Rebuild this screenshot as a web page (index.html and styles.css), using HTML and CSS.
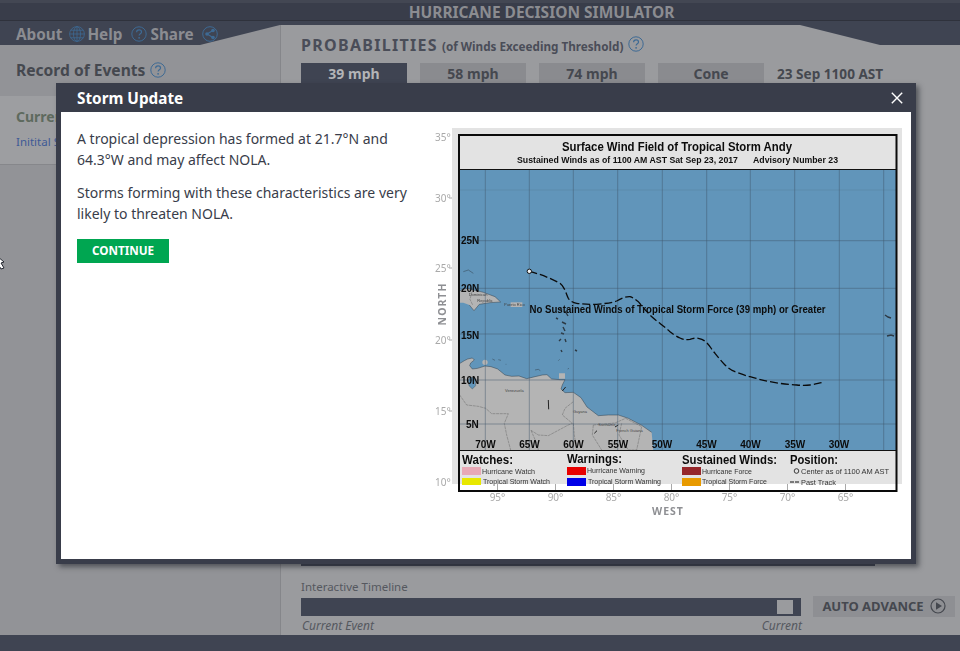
FILE: index.html
```html
<!DOCTYPE html>
<html lang="en">
<head>
<meta charset="utf-8">
<title>Hurricane Decision Simulator</title>
<link rel="stylesheet" href="styles.css">
</head>
<body>
<svg class="defs" width="0" height="0" aria-hidden="true">
  <symbol id="i-help" viewBox="0 0 16 16">
    <circle cx="8" cy="8" r="7.2" fill="none" stroke="currentColor" stroke-width="1"/>
    <path d="M5.6 6.2c0-1.500 1.100-2.300 2.500-2.300 1.400 0 2.400.8 2.400 2 0 1.800-2.400 1.900-2.400 3.700" fill="none" stroke="currentColor" stroke-width="1.200"/>
    <circle cx="8.100" cy="11.800" r=".9" fill="currentColor"/>
  </symbol>
  <symbol id="i-globe" viewBox="0 0 16 16">
    <g fill="none" stroke="currentColor" stroke-width=".8">
      <circle cx="8" cy="8" r="7.400"/>
      <ellipse cx="8" cy="8" rx="3.500" ry="7.400"/>
      <path d="M8 .6v14.800M.6 8h14.800M1.800 4.200h12.400M1.800 11.800h12.400"/>
    </g>
  </symbol>
  <symbol id="i-share" viewBox="0 0 16 16">
    <circle cx="8" cy="8" r="7.300" fill="none" stroke="currentColor" stroke-width="1"/>
    <path d="M11 4.500 5 8l6 3.500" fill="none" stroke="currentColor" stroke-width="1.200"/>
    <circle cx="11" cy="4.500" r="1.800" fill="currentColor"/>
    <circle cx="5" cy="8" r="1.800" fill="currentColor"/>
    <circle cx="11" cy="11.500" r="1.800" fill="currentColor"/>
  </symbol>
</svg>

<div class="app">
  <header class="titlebar">HURRICANE DECISION SIMULATOR</header>
  <div class="navrow">
    <nav class="nav">
      <span class="nav-item">About <svg class="nav-icon nav-icon-globe"><use href="#i-globe"/></svg></span>
      <span class="nav-item">Help <svg class="nav-icon nav-icon-help"><use href="#i-help"/></svg></span>
      <span class="nav-item">Share <svg class="nav-icon nav-icon-share"><use href="#i-share"/></svg></span>
    </nav>
    <div class="nav-notch"></div>
    <div class="nav-end"></div>
  </div>
  <main class="columns">
    <aside class="sidebar">
      <h2 class="record-title">Record of Events <svg class="help-icon"><use href="#i-help"/></svg></h2>
      <section class="record-current">
        <h3 class="current-title">Current Event</h3>
        <p class="current-text">Initital Storm Update</p>
      </section>
    </aside>
    <section class="panel">
      <h1 class="prob-title">PROBABILITIES <small class="prob-sub">(of Winds Exceeding Threshold)</small> <svg class="help-icon"><use href="#i-help"/></svg></h1>
      <div class="tabs">
        <span class="tab tab-active">39 mph</span>
        <span class="tab">58 mph</span>
        <span class="tab">74 mph</span>
        <span class="tab">Cone</span>
        <span class="tab-date">23 Sep 1100 AST</span>
      </div>
      <div class="map-frame"></div>
      <div class="timeline-label">Interactive Timeline</div>
      <div class="timeline-row">
        <div class="timeline-bar"><span class="thumb"></span></div>
        <button class="auto-advance" type="button">AUTO ADVANCE
          <svg class="play" viewBox="0 0 16 16"><circle cx="8" cy="8" r="7" fill="none" stroke="currentColor" stroke-width="1.200"/><path d="M6 4.200 12 8l-6 3.800z" fill="currentColor"/></svg>
        </button>
      </div>
      <div class="timeline-caption"><span>Current Event</span><span>Current</span></div>
    </section>
  </main>
  <footer class="footer"></footer>
</div>

<svg class="cursor" viewBox="0 0 6 14" aria-hidden="true"><path d="M-3 0 4 6 1 7 4 12 1 13-2 8z" fill="#fff" stroke="#23262f" stroke-width="1"/></svg>

<div class="modal">
  <div class="modal-head">
    <span class="modal-title">Storm Update</span>
    <svg class="modal-close" viewBox="0 0 12 12"><path d="M.8.8l10.400 10.400M11.200.8.800 11.200" stroke="#fff" stroke-width="1.400" fill="none"/></svg>
  </div>
  <div class="modal-body">
    <div class="modal-text">
      <p class="para">A tropical depression has formed at 21.7°N and 64.3°W and may affect NOLA.</p>
      <p class="para">Storms forming with these characteristics are very likely to threaten NOLA.</p>
      <button class="continue" type="button">CONTINUE</button>
    </div>
    <svg class="map" viewBox="430 125 475 395" width="475" height="395">
      <!-- image background -->
      <rect x="452" y="128" width="450" height="356" fill="#e3e3e3"/>
      <rect x="458" y="169" width="438" height="281" fill="#6195ba"/>

      <!-- South America -->
      <g transform="translate(455 355) scale(.3333)">
        <path class="land" d="M10 28 28 17 38 12 52 9 58 15 47 24 44 32 52 42 68 40 90 33 108 35 128 42 150 60 170 64 192 63 215 71 240 65 262 60 276 59 290 72 315 74 330 74 322 90 318 102 330 113 355 112 378 128 396 156 430 182 460 180 490 180 520 190 560 211 590 232 595 287 10 287z"/>
        <path class="lake" d="M46 66 60 70 62 92 52 102 42 92 40 76z"/>
        <path class="land" d="M82 22a8 8 0 1 1 16 0 8 8 0 1 1-16 0zM312 55h18v16h-18z"/>
        <path class="coast" d="M10 28 28 17 38 12 52 9 58 15 47 24 44 32 52 42 68 40 90 33 108 35 128 42 150 60 170 64 192 63 215 71 240 65 262 60 276 59 290 72 315 74 330 74 322 90 318 102 330 113 355 112 378 128 396 156 430 182 460 180 490 180 520 190 560 211 590 232"/>
        <path class="border" d="M14 120 35 150 70 154 92 160 110 176 160 176 148 205 155 240 167 285M228 226 250 240 280 242 340 210 352 205 322 180 330 160 355 140M355 205 358 240 365 285M228 226 245 265 250 285M415 210 480 204 512 190M415 210 412 240 440 285M500 205 492 240 520 285M512 190 560 215 545 285 520 285"/>
        <path class="coast" d="M112 12l8 4M130 14l8 2M152 28l2 0M240 45l10-2 6 4M310 17l4-4M338 42l4-2"/>
        <path d="M322 108l10-12M418 235l8-8M280 135l1 28M480 216l10-6" stroke="#222" stroke-width="3" fill="none"/>
        <text class="place" x="150" y="110">Venezuela</text>
        <text class="place" x="354" y="175">Guyana</text>
        <text class="place" x="430" y="214">Suriname</text>
        <text class="place" x="484" y="230">French Guiana</text>
      </g>

      <!-- Caribbean islands -->
      <g transform="translate(440 260) scale(.3333)">
        <path class="land" d="M58 95 66 88 84 86 110 92 130 97 165 110 182 126 150 128 118 133 102 152 88 135 70 128 58 128z"/>
        <rect class="land" x="212" y="127" width="35" height="14"/>
        <path class="coast" d="M70 35 85 30 100 40M58 95 66 88 84 86 110 92 130 97 165 110 182 126 150 128 118 133 102 152 88 135"/>
        <path class="border" d="M96 95 90 118 98 135"/>
        <text class="place" x="86" y="109">Dominican</text>
        <text class="place" x="112" y="127">Republic</text>
        <text class="place" x="192" y="137">Puerto Rico</text>
      </g>
      <path class="coast" d="M560 308l2 2M565 311l3 5M556 318l2 1M562 322l4 2M563 327l2 4M561 333l3 1M565 339l1 3M561 350l1 2M575 350l2 1M559 341l2-2M885 315l3 2 3 1M887 336l4-1 3 1"/>

      <!-- grid -->
      <path class="grid" d="M485.300 169V450M529.300 169V450M573.300 169V450M617.700 169V450M662.300 169V450M706.700 169V450M750.300 169V450M794.700 169V450M839.300 169V450M883.700 169V450"/>
      <path class="grid grid-faint" d="M458 190H896"/>
      <path class="grid" d="M458 240.700H896M458 288.300H896M458 334H896M458 380H896M458 424H896"/>

      <!-- track -->
      <path class="track" d="M529.300 271.300C540 274 550 278 560 283.300 565 287 566 294 568.300 298.300 571 302 574 303 576.700 303.300 585 304.500 590 304.500 596.700 304.300 605 303.500 611 303 616.700 301 622 298 626 296.500 630 296.700 634 298 636 300 638.300 301.700 642 306 646 311 650 315 656 321 664 326 670 331.700 673 334 677 337 680 338 684 340 686 340 690 339.300 694 338 696 338 698.300 338.300 702 339 704 340 706.700 342.700 710 346 712 350 715 353.300 718 357 721 361 725 365 728 368 731 370 735 371.700 740 373.500 745 375.500 750 376.700 757 378.500 763 380.500 770 381.700 779 383.500 788 384.500 796.700 385 802 385.500 806 385.500 810 385 815 384.500 819 383 823.300 382.300"/>
      <circle cx="529.300" cy="271.300" r="2.200" fill="#f2f2f2" stroke="#111" stroke-width="1"/>

      <!-- map labels -->
      <g class="lat">
        <text x="461" y="244">25N</text>
        <text x="461" y="292">20N</text>
        <text x="461" y="339">15N</text>
        <text x="461" y="384">10N</text>
        <text x="466" y="428">5N</text>
      </g>
      <g class="lon">
        <text x="485.500" y="448">70W</text>
        <text x="529.500" y="448">65W</text>
        <text x="573.500" y="448">60W</text>
        <text x="618" y="448">55W</text>
        <text x="662" y="448">50W</text>
        <text x="706.500" y="448">45W</text>
        <text x="750.500" y="448">40W</text>
        <text x="795" y="448">35W</text>
        <text x="839" y="448">30W</text>
      </g>
      <text class="no-winds" x="529.500" y="313" textLength="296" lengthAdjust="spacingAndGlyphs">No Sustained Winds of Tropical Storm Force (39 mph) or Greater</text>

      <!-- header -->
      <rect x="458" y="134" width="438" height="35" fill="#e3e3e3"/>
      <path class="rule" d="M458 169.500H896M458 450.500H896"/>
      <text class="map-title" x="562" y="151" textLength="230" lengthAdjust="spacingAndGlyphs">Surface Wind Field of Tropical Storm Andy</text>
      <text class="map-sub" x="517" y="163" textLength="221" lengthAdjust="spacingAndGlyphs">Sustained Winds as of 1100 AM AST Sat Sep 23, 2017</text>
      <text class="map-sub" x="753" y="163" textLength="85" lengthAdjust="spacingAndGlyphs">Advisory Number 23</text>

      <!-- white strip where the chart image ends, then legend -->
      <rect x="458" y="484" width="439" height="7" fill="#fff"/>
      <rect x="458" y="451" width="438" height="33" fill="#e3e3e3"/>
      <text class="leg-head" x="462" y="464" textLength="51" lengthAdjust="spacingAndGlyphs">Watches:</text>
      <text class="leg-head" x="567" y="463" textLength="55" lengthAdjust="spacingAndGlyphs">Warnings:</text>
      <text class="leg-head" x="682" y="464" textLength="95" lengthAdjust="spacingAndGlyphs">Sustained Winds:</text>
      <text class="leg-head" x="790" y="464" textLength="48" lengthAdjust="spacingAndGlyphs">Position:</text>
      <rect x="462" y="467" width="19" height="8" fill="#e8a9b6"/>
      <rect x="462" y="478" width="19" height="7" fill="#e8e800"/>
      <rect x="567" y="467" width="19" height="8" fill="#e80000"/>
      <rect x="567" y="478" width="19" height="8" fill="#0000e8"/>
      <rect x="682" y="467" width="19" height="8" fill="#95262a"/>
      <rect x="682" y="478" width="19" height="8" fill="#e89a00"/>
      <text class="leg" x="482" y="474" textLength="53" lengthAdjust="spacingAndGlyphs">Hurricane Watch</text>
      <text class="leg" x="483" y="484" textLength="67" lengthAdjust="spacingAndGlyphs">Tropical Storm Watch</text>
      <text class="leg" x="587" y="473" textLength="58" lengthAdjust="spacingAndGlyphs">Hurricane Warning</text>
      <text class="leg" x="588" y="484" textLength="73" lengthAdjust="spacingAndGlyphs">Tropical Storm Warning</text>
      <text class="leg" x="702" y="474" textLength="50" lengthAdjust="spacingAndGlyphs">Hurricane Force</text>
      <text class="leg" x="702" y="484" textLength="65" lengthAdjust="spacingAndGlyphs">Tropical Storm Force</text>
      <circle cx="796.500" cy="471" r="2.300" fill="none" stroke="#111" stroke-width=".8"/>
      <text class="leg" x="801" y="474" textLength="88" lengthAdjust="spacingAndGlyphs">Center as of 1100 AM AST</text>
      <path d="M790 482h4M795 482h4" stroke="#111" stroke-width="1"/>
      <text class="leg" x="801" y="485" textLength="35" lengthAdjust="spacingAndGlyphs">Past Track</text>

      <!-- black frame -->
      <path class="frame" d="M459 135H896.500V491H459z"/>

      <!-- axis ticks and labels -->
      <g class="tick">
        <path d="M449 198h3M449 268h3M449 340h3M449 411h3M497.500 484v6M555.500 484v6M613.500 484v6M671.500 484v6M729.500 484v6M787.500 484v6M845.500 484v6"/>
      </g>
      <g class="axis-y">
        <text x="435" y="141">35°</text>
        <text x="435" y="202">30°</text>
        <text x="435" y="272">25°</text>
        <text x="435" y="344">20°</text>
        <text x="435" y="415">15°</text>
        <text x="435" y="486">10°</text>
      </g>
      <g class="axis-x">
        <text x="497.500" y="501">95°</text>
        <text x="555.500" y="501">90°</text>
        <text x="613.500" y="501">85°</text>
        <text x="671.500" y="501">80°</text>
        <text x="729.500" y="501">75°</text>
        <text x="787.500" y="501">70°</text>
        <text x="845.500" y="501">65°</text>
      </g>
      <text class="axis-title" transform="translate(446 304) rotate(-90)">NORTH</text>
      <text class="axis-title" x="668" y="515">WEST</text>
    </svg>
  </div>
</div>
</body>
</html>
```

FILE: styles.css
```css
* { box-sizing: border-box; }
html, body { margin: 0; padding: 0; height: 651px; overflow: hidden; }
body { font-family: "Noto Sans", "Open Sans", sans-serif; background: #929397; position: relative; }
.defs { position: absolute; }

.app { display: flex; flex-direction: column; height: 651px; }

.titlebar {
  height: 21px;
  flex: none;
  padding: 2px 0 0 123px;
  background: #393d4a;
  border-top: 3px solid #434753;
  border-bottom: 1px solid #2f323c;
  color: #8b8c91;
  font-weight: 700;
  font-size: 15.500px;
  line-height: 15px;
  text-align: center;
}
.navrow { display: flex; height: 24px; background: #3f4452; flex: none; }
.nav {
  width: 200px;
  flex: none;
  padding: 1px 0 0 16px;
  display: flex;
  align-items: center;
  position: relative;
  z-index: 1;
  color: #8b8c91;
  font-weight: 700;
  font-size: 15.300px;
}
.nav-item { display: inline-flex; align-items: center; white-space: nowrap; }
.nav-icon { width: 16px; height: 16px; color: #3e6a94; flex: none; }
.nav-icon-globe { margin-left: 7px; margin-right: 2px; }
.nav-icon-help { margin-left: 9px; margin-right: 3px; }
.nav-icon-share { margin-left: 8px; }
.nav-notch {
  flex: 1;
  background: linear-gradient(90deg, #929397 80px, #85868a 80px, #85868a 81px, #9a9b9e 81px);
  clip-path: polygon(0 100%, 80px 4px, calc(100% - 80px) 4px, 100% 100%);
}
.nav-end { width: 80px; flex: none; }

.columns { flex: 1; display: flex; min-height: 0; background: #9a9b9e; }
.sidebar { width: 281px; background: #929397; border-right: 1px solid #85868a; flex: none; }
.record-title {
  margin: 0;
  height: 51px;
  padding: 14px 0 0 16px;
  font-size: 15.600px;
  line-height: 22px;
  font-weight: 700;
  color: #45484f;
  display: flex;
  align-items: flex-start;
  white-space: nowrap;
}
.help-icon { width: 16px; height: 16px; color: #3e6a94; margin-left: 5px; margin-top: 3px; flex: none; }
.record-current {
  height: 69px;
  background: #9d9ea1;
  border-bottom: 1px solid #86878b;
  padding: 11px 0 0 16px;
}
.current-title { margin: 0; font-size: 14px; line-height: 20px; font-weight: 700; color: #5e6a5e; }
.current-text { margin: 6px 0 0; font-size: 11.500px; line-height: 18px; color: #3e5a96; }

.panel { flex: 1; margin-top: -20px; padding: 0 5px 0 20px; display: flex; flex-direction: column; min-width: 0; position: relative; z-index: 1; }
.prob-title {
  margin: 0;
  height: 38px;
  flex: none;
  padding-top: 9px;
  font-size: 16px;
  line-height: 22px;
  font-weight: 700;
  letter-spacing: 1.300px;
  color: #4a4d58;
  display: flex;
  align-items: flex-start;
  white-space: nowrap;
}
.prob-sub { font-size: 11.700px; letter-spacing: 0; margin-left: 4px; line-height: 24px; }
.prob-title .help-icon { margin-left: 5px; margin-top: 2px; }
.tabs { display: flex; gap: 13px; height: 24px; flex: none; align-items: flex-start; }
.tab {
  width: 106px;
  height: 24px;
  background: #8a8b8f;
  color: #45484f;
  font-size: 14px;
  font-weight: 700;
  line-height: 22px;
  text-align: center;
}
.tab-active { background: #3f4452; color: #b3b4b7; }
.tab-date { font-size: 13.600px; font-weight: 700; color: #45484f; line-height: 22px; }
.map-frame { width: 574px; height: 479px; background: #3f4452; flex: none; }
.timeline-label { margin-top: 13px; font-size: 11.500px; line-height: 16px; color: #55585f; flex: none; }
.timeline-row { display: flex; align-items: center; gap: 12px; height: 21px; margin-top: 1px; flex: none; }
.timeline-bar { width: 500px; height: 18px; background: #3f4452; display: flex; align-items: center; justify-content: flex-end; padding-right: 8px; }
.thumb { width: 16px; height: 14px; background: #9a9b9e; }
.auto-advance {
  width: 142px;
  height: 21px;
  border: 0;
  padding: 0 0 1px;
  background: #8e8f93;
  color: #45484f;
  font-family: inherit;
  font-size: 13px;
  font-weight: 700;
  display: flex;
  align-items: center;
  justify-content: center;
  gap: 6px;
}
.play { width: 16px; height: 16px; }
.timeline-caption { width: 501px; flex: none; display: flex; justify-content: space-between; font-size: 12px; font-style: italic; line-height: 16px; color: #55585f; padding-left: 1px; margin-top: 1px; }

.footer { height: 16px; background: #3f4452; flex: none; position: relative; z-index: 2; }

.cursor { position: absolute; left: 0; top: 256px; width: 6px; height: 14px; }

.modal {
  position: absolute;
  z-index: 3;
  left: 56px;
  top: 83px;
  width: 860px;
  height: 481px;
  background: #393d4a;
  padding: 0 5px 5px;
  box-shadow: 3px 3px 5px rgba(30, 32, 40, .55);
  display: flex;
  flex-direction: column;
}
.modal-head { height: 29px; flex: none; display: flex; align-items: center; justify-content: space-between; padding: 2px 8px 0 16px; }
.modal-title { color: #fff; font-weight: 700; font-size: 15.300px; line-height: 27px; }
.modal-close { width: 12px; height: 12px; margin-top: -2px; }
.modal-body { flex: 1; background: #fff; display: flex; align-items: flex-start; padding-top: 13px; }
.modal-text { width: 369px; flex: none; padding: 3px 16px 0; }
.para { margin: 0 0 12px; font-size: 14px; line-height: 21px; color: #393d4a; }
.continue {
  display: block;
  width: 92px;
  height: 24px;
  margin-top: 15px;
  border: 0;
  padding: 0 0 2px;
  background: #00a651;
  color: #fff;
  font-family: inherit;
  font-weight: 700;
  font-size: 11.700px;
}
.map { flex: none; display: block; filter: blur(.35px); }

.land { fill: #b4b4b4; stroke: none; }
.lake { fill: #6195ba; stroke: #333; stroke-width: 1; }
.coast { fill: none; stroke: #2d3a45; stroke-width: 1.400; }
.border { fill: none; stroke: #555; stroke-width: 1.200; stroke-dasharray: 9 2; }
.place { font-family: "Liberation Sans", sans-serif; font-size: 12px; fill: #444; }
.grid { fill: none; stroke: #40576b; stroke-width: .8; opacity: .6; }
.grid-faint { opacity: .2; }
.track { fill: none; stroke: #0a0a0a; stroke-width: 1.300; stroke-dasharray: 8 3; }
.lat text, .lon text, .no-winds { font-family: "Liberation Sans", sans-serif; font-weight: 700; fill: #0c0c0c; }
.lat text { font-size: 10px; }
.lon text { font-size: 10px; text-anchor: middle; }
.no-winds { font-size: 10.500px; }
.rule { stroke: #111; stroke-width: 1.200; fill: none; }
.frame { fill: none; stroke: #0a0a0a; stroke-width: 2; }
.map-title { font-family: "Liberation Sans", sans-serif; font-weight: 700; font-size: 12px; fill: #0c0c0c; }
.map-sub { font-family: "Liberation Sans", sans-serif; font-weight: 700; font-size: 9px; fill: #111; }
.leg-head { font-family: "Liberation Sans", sans-serif; font-weight: 700; font-size: 12px; fill: #0c0c0c; }
.leg { font-family: "Liberation Sans", sans-serif; font-size: 7.500px; fill: #333; }
.tick path { stroke: #a9a9a9; stroke-width: 1; fill: none; }
.axis-y text, .axis-x text { font-family: "Noto Sans", sans-serif; font-size: 10px; fill: #a9a9a9; }
.axis-x text { text-anchor: middle; }
.axis-title { font-family: "Noto Sans", sans-serif; font-size: 10.500px; font-weight: 700; letter-spacing: 1px; fill: #8e8f93; text-anchor: middle; }
```
